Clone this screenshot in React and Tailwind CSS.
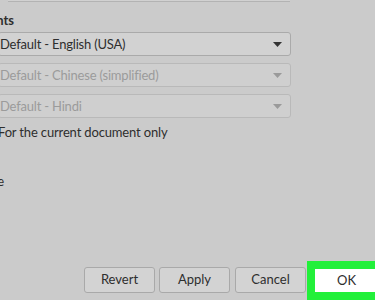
const font = { fontFamily: 'Lato, "Noto Sans", sans-serif' };

function Caret({ disabled }) {
  return (
    <svg width="9" height="5" viewBox="0 0 9 5" className="shrink-0">
      <path d="M0 0 H9 L4.5 5 Z" fill={disabled ? '#9a9a9a' : '#333333'} />
    </svg>
  );
}

function Select({ label, disabled = false }) {
  return (
    <div
      className={
        'ml-[-2px] w-[293px] h-[24px] flex items-center justify-between pl-[1px] pr-[8px] rounded-[3px] border ' +
        (disabled
          ? 'border-[#b9b9b9] bg-[#cfcfcf] text-[#9b9b9b]'
          : 'border-[#aaaaaa] bg-[#d2d2d2] text-[#2e2e2e]')
      }
    >
      <span className="text-[13px] leading-none whitespace-nowrap tracking-[-0.2px]">{label}</span>
      <Caret disabled={disabled} />
    </div>
  );
}

function Button({ children }) {
  return (
    <div className="shrink-0 w-[71px] h-[26px] mt-[6px] flex items-center justify-center rounded-[3px] border border-[#a9a9a9] bg-[#d3d3d3] text-[13px] text-[#2e2e2e]">
      {children}
    </div>
  );
}

export default function App() {
  return (
    <div className="w-[375px] h-[300px] overflow-hidden bg-[#cbcbcb] flex flex-col" style={font}>
      <div className="ml-[8px] w-[282px] h-[2px] bg-[#d1d1d1] border-b border-[#b3b3b3]" />

      <div className="mt-[11px] w-[14px] flex justify-end whitespace-nowrap text-[13px] font-bold leading-[14px] text-[#2e2e2e]">
        Default Languages for Documents
      </div>

      <div className="mt-[5px] flex flex-col gap-[7px]">
        <Select label="Default - English (USA)" />
        <Select label="Default - Chinese (simplified)" disabled />
        <Select label="Default - Hindi" disabled />
      </div>

      <div className="mt-[6px] ml-[-2px] text-[13px] leading-[16px] tracking-[-0.15px] text-[#2e2e2e] whitespace-nowrap">
        For the current document only
      </div>

      <div className="mt-[33px] w-[4px] flex justify-end whitespace-nowrap text-[13px] leading-[16px] text-[#2e2e2e]">
        Ignore system input language
      </div>

      <div className="mt-auto flex items-start pl-[84px]">
        <Button>Revert</Button>
        <div className="shrink-0 w-[4px]" />
        <Button>Apply</Button>
        <div className="shrink-0 w-[5px]" />
        <Button>Cancel</Button>
        <div className="shrink-0 w-[1px]" />
        <div className="shrink-0 w-[80px] h-[39px] border-[8px] border-[#22f03a] bg-white flex items-center pl-[22px] text-[13px] text-[#2e2e2e]">
          OK
        </div>
      </div>
    </div>
  );
}
